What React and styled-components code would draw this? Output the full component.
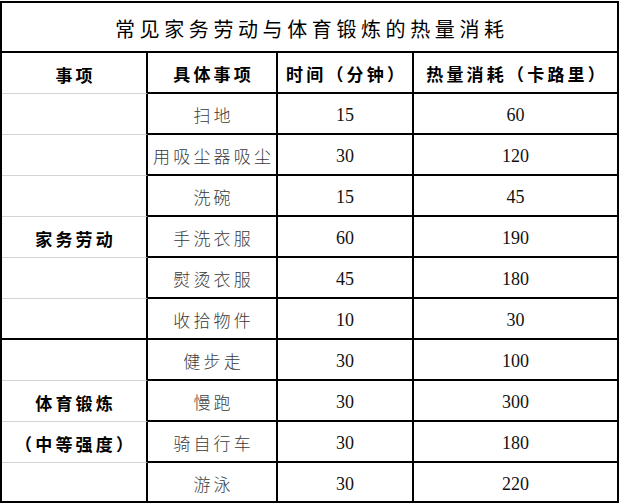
import React from 'react'
import styled, { createGlobalStyle } from 'styled-components'

const GlobalStyle = createGlobalStyle`
  html, body {
    margin: 0;
    padding: 0;
    background: #fff;
  }
  body {
    font-family: "Noto Sans CJK SC", sans-serif;
    color: #000;
  }
`;

const rows = [
  { item: '扫地', min: 15, kcal: 60 },
  { item: '用吸尘器吸尘', min: 30, kcal: 120 },
  { item: '洗碗', min: 15, kcal: 45 },
  { item: '手洗衣服', min: 60, kcal: 190, label: '家务劳动' },
  { item: '熨烫衣服', min: 45, kcal: 180 },
  { item: '收拾物件', min: 10, kcal: 30, groupEnd: true },
  { item: '健步走', min: 30, kcal: 100 },
  { item: '慢跑', min: 30, kcal: 300, label: '体育锻炼' },
  { item: '骑自行车', min: 30, kcal: 180, label: '（中等强度）' },
  { item: '游泳', min: 30, kcal: 220, groupEnd: true },
];

const Sheet = styled.div`
  display: grid;
  grid-template-columns: 146px 130px 136px 205px;
  grid-template-rows: 50px repeat(10, 41px) 40px;
  width: 619px;
  box-sizing: border-box;
  margin-top: 1px;
  border-top: 2px solid #000;
  border-left: 2px solid #000;
`;

const Cell = styled.div`
  display: flex;
  align-items: center;
  justify-content: center;
  box-sizing: border-box;
  border-right: 2px solid #000;
  border-bottom: ${({ $soft }) => ($soft ? '1px solid #d4d4d4' : '2px solid #000')};
  padding-top: ${({ $pt }) => $pt ?? 4}px;
  white-space: nowrap;
`;

const Title = styled(Cell)`
  grid-column: 1 / -1;
  font-size: 20px;
  letter-spacing: 4.6px;
  padding-left: 4.6px;
`;

const Head = styled(Cell)`
  font-size: 17px;
  font-weight: 700;
  letter-spacing: 3.2px;
  padding-left: 3.2px;
`;

const Label = styled(Cell)`
  font-size: 17px;
  font-weight: 700;
  letter-spacing: 3.2px;
  padding-left: 3.2px;
`;

const Text = styled(Cell)`
  font-size: 17px;
  font-weight: 300;
  color: #3a3a3a;
  letter-spacing: 3.2px;
  padding-left: 3.2px;
`;

const Num = styled(Cell)`
  font-family: "Liberation Serif", "Noto Sans CJK SC", serif;
  font-size: 18px;
  color: #111;
`;

export default function App() {
  return (
    <>
      <GlobalStyle />
      <Sheet>
        <Title $pt={3}>常见家务劳动与体育锻炼的热量消耗</Title>
        <Head $soft $pt={2}>事项</Head>
        <Head $pt={2}>具体事项</Head>
        <Head $pt={2}>时间（分钟）</Head>
        <Head $pt={2}>热量消耗（卡路里）</Head>
        {rows.map((r) => (
          <React.Fragment key={r.item}>
            <Label $soft={!r.groupEnd} $pt={2}>{r.label}</Label>
            <Text $pt={2}>{r.item}</Text>
            <Num>{r.min}</Num>
            <Num>{r.kcal}</Num>
          </React.Fragment>
        ))}
      </Sheet>
    </>
  );
}
